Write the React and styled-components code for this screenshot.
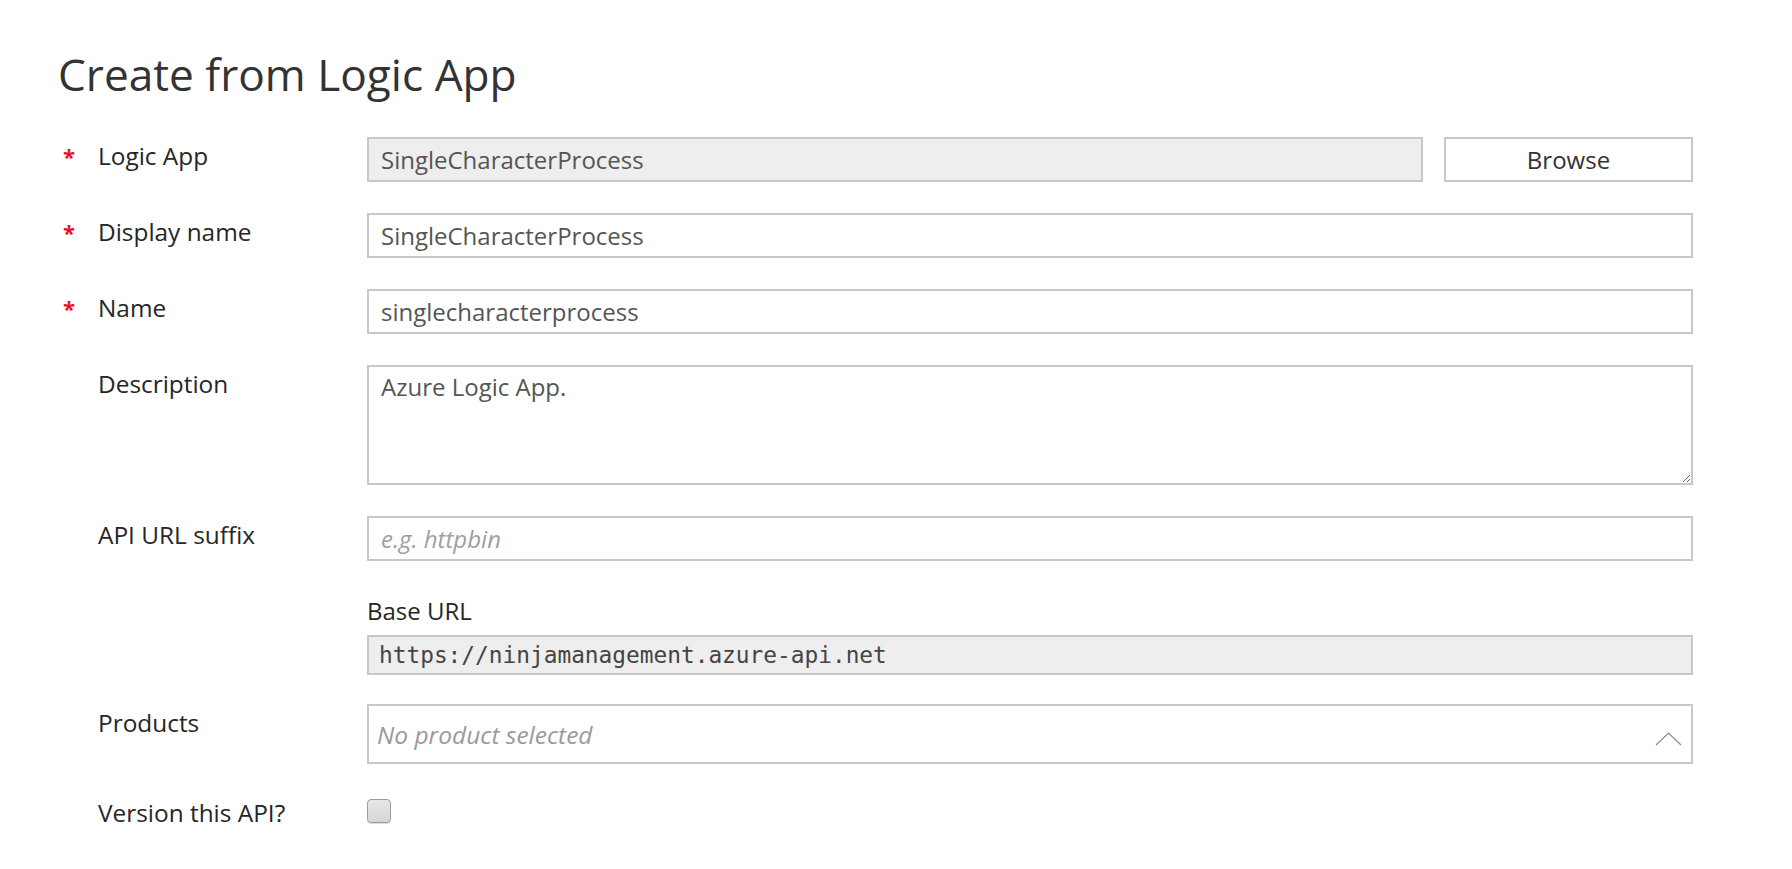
import React from "react";
import styled, { createGlobalStyle } from "styled-components";

const GlobalStyle = createGlobalStyle`
  html, body { margin: 0; padding: 0; background: #ffffff; }
  body { font-family: "Open Sans", "Noto Sans", sans-serif; color: #333; }
  * { box-sizing: border-box; }
`;

const Page = styled.div`
  padding: 48px 0 0 58px;
  width: 1693px;
`;

const Title = styled.h1`
  margin: 0;
  font-family: "Open Sans", "Noto Sans", sans-serif;
  font-weight: 400;
  font-size: 44.2px;
  line-height: 53px;
  color: #333;
`;

const Form = styled.div`
  margin-top: 36px;
  display: flex;
  flex-direction: column;
`;

const Row = styled.div`
  display: grid;
  grid-template-columns: 309px 1fr;
  align-items: start;
  margin-bottom: ${(p) => p.$gap ?? 31}px;
`;

const LabelCell = styled.div`
  display: flex;
  align-items: flex-start;
  padding-top: ${(p) => p.$top ?? 3}px;
  font-size: 24.4px;
  line-height: 32px;
  color: #262626;
`;

const Star = styled.span`
  width: 40px;
  padding-left: 5px;
  color: #e81123;
  font-weight: 700;
  font-size: 22px;
`;

const LabelText = styled.span`
  white-space: nowrap;
`;

const Control = styled.div`
  display: flex;
  gap: 21px;
  align-items: stretch;
`;

const TextInput = styled.input`
  flex: 1;
  min-width: 0;
  height: 45px;
  border: 2px solid #c8c8c8;
  background: ${(p) => (p.$readonly ? "#eeeeee" : "#ffffff")};
  padding: 0 12px;
  font-family: "Open Sans", "Noto Sans", sans-serif;
  font-size: 24px;
  color: #555;
  outline: none;
  &::placeholder {
    color: #a0a0a0;
    font-style: italic;
  }
`;

const BrowseButton = styled.button`
  width: 249px;
  height: 45px;
  border: 2px solid #c8c8c8;
  background: #fff;
  font-family: "Open Sans", "Noto Sans", sans-serif;
  font-size: 24px;
  color: #333;
  padding: 0;
`;

const TextArea = styled.textarea`
  width: 100%;
  height: 120px;
  border: 2px solid #c8c8c8;
  background: #fff;
  padding: 4px 12px;
  font-family: "Open Sans", "Noto Sans", sans-serif;
  font-size: 24px;
  line-height: 32px;
  color: #555;
  resize: vertical;
  outline: none;
  display: block;
`;

const SubBlock = styled.div`
  display: flex;
  flex-direction: column;
  gap: 9px;
  padding-top: 5px;
`;

const SubLabel = styled.div`
  font-size: 24px;
  line-height: 30px;
  color: #262626;
`;

const CodeField = styled.div`
  height: 40px;
  border: 2px solid #c8c8c8;
  background: #eeeeee;
  padding: 0 10px;
  display: flex;
  align-items: center;
  font-family: "DejaVu Sans Mono", "Liberation Mono", monospace;
  font-size: 22.8px;
  color: #444;
`;

const Select = styled.div`
  flex: 1;
  height: 60px;
  border: 2px solid #c8c8c8;
  background: #fff;
  display: flex;
  align-items: center;
  justify-content: space-between;
  padding: 0 9px 0 8px;
`;

const Placeholder = styled.span`
  font-style: italic;
  font-size: 24.5px;
  color: #9a9a9a;
`;

const Chevron = styled.svg`
  margin-top: 10px;
`;

const CheckBox = styled.span`
  display: block;
  width: 24px;
  height: 24px;
  margin-top: 2px;
  border: 1px solid #9c9c9c;
  border-radius: 4px;
  background: linear-gradient(#e6e6e6, #d6d6d6);
  box-shadow: 0 1px 1px rgba(0, 0, 0, 0.15);
`;

function Field({ label, required, children, gap, top }) {
  return (
    <Row $gap={gap}>
      <LabelCell $top={top}>
        <Star>{required ? "*" : ""}</Star>
        <LabelText>{label}</LabelText>
      </LabelCell>
      <Control>{children}</Control>
    </Row>
  );
}

export default function App() {
  return (
    <>
      <GlobalStyle />
      <Page>
        <Title>Create from Logic App</Title>
        <Form>
          <Field label="Logic App" required>
            <TextInput $readonly readOnly value="SingleCharacterProcess" />
            <BrowseButton>Browse</BrowseButton>
          </Field>
          <Field label="Display name" required>
            <TextInput readOnly value="SingleCharacterProcess" />
          </Field>
          <Field label="Name" required>
            <TextInput readOnly value="singlecharacterprocess" />
          </Field>
          <Field label="Description">
            <TextArea readOnly defaultValue="Azure Logic App." />
          </Field>
          <Field label="API URL suffix" gap={30}>
            <TextInput readOnly placeholder="e.g. httpbin" />
          </Field>
          <Row $gap={29}>
            <div />
            <SubBlock>
              <SubLabel>Base URL</SubLabel>
              <CodeField>https://ninjamanagement.azure-api.net</CodeField>
            </SubBlock>
          </Row>
          <Field label="Products" gap={33}>
            <Select>
              <Placeholder>No product selected</Placeholder>
              <Chevron width="27" height="14" viewBox="0 0 27 14">
                <polyline points="1,13 13.5,1 26,13" fill="none" stroke="#8a8a8a" strokeWidth="1.2" />
              </Chevron>
            </Select>
          </Field>
          <Field label="Version this API?" top={0}>
            <CheckBox />
          </Field>
        </Form>
      </Page>
    </>
  );
}
